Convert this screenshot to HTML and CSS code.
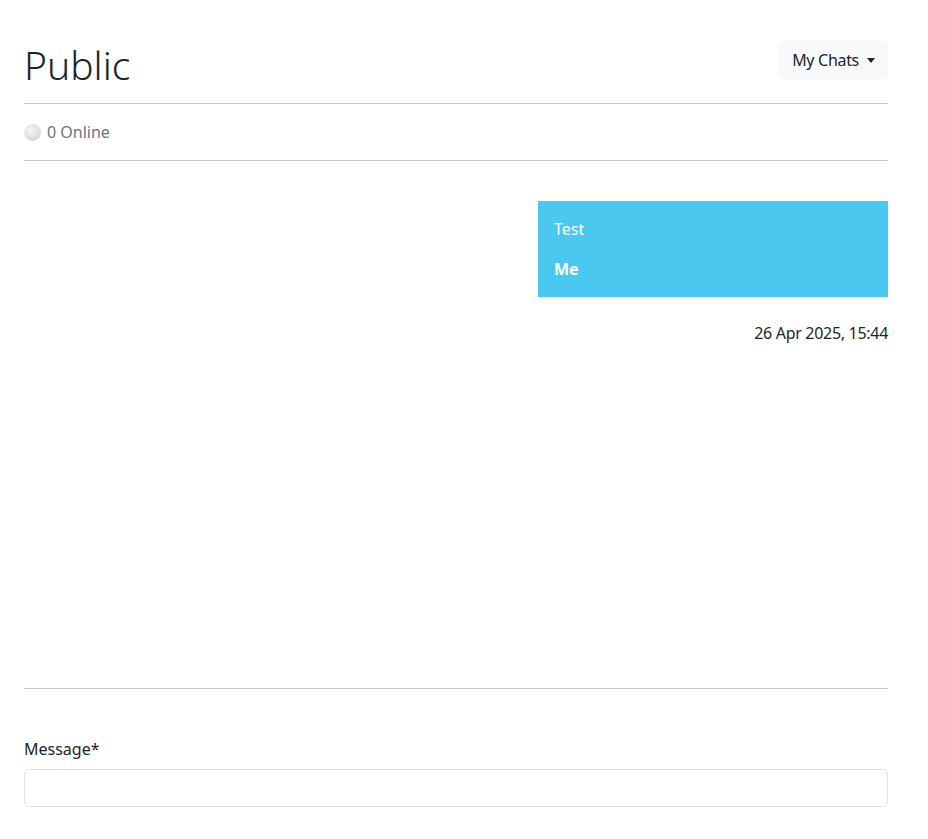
FILE: index.html
```html
<!DOCTYPE html>
<html lang="en">
<head>
<meta charset="utf-8">
<title>Public</title>
<link rel="stylesheet" href="styles.css">
</head>
<body>
<div class="container">
  <header class="head">
    <h1 class="title">Public</h1>
    <button class="dropdown" type="button">My Chats <span class="caret"></span></button>
  </header>
  <hr class="rule">
  <div class="online"><span class="dot"></span>0 Online</div>
  <hr class="rule">
  <div class="messages">
    <div class="msg">
      <div class="bubble">
        <p class="text">Test</p>
        <p class="author">Me</p>
      </div>
      <div class="time">26 Apr 2025, 15:44</div>
    </div>
  </div>
  <hr class="rule">
  <form class="form">
    <label class="label" for="m">Message*</label>
    <input class="input" id="m" type="text">
  </form>
</div>
</body>
</html>
```
FILE: styles.css
```css
* { box-sizing: border-box; }
html, body { margin: 0; background: #fff; }
body {
  font-family: "Noto Sans", "Open Sans", sans-serif;
  font-size: 16px;
  line-height: 1.5;
  color: #212529;
}
.container {
  width: 864px;
  margin-left: 24px;
  padding-top: 41px;
}
.head {
  display: flex;
  justify-content: space-between;
  align-items: center;
  margin-bottom: 14px;
}
.title {
  margin: 0;
  font-size: 39px;
  font-weight: 300;
  line-height: 48px;
}
.dropdown {
  font: inherit;
  font-size: 16px;
  letter-spacing: -0.3px;
  color: #212529;
  background: #f8f9fa;
  border: 1px solid #f8f9fa;
  border-radius: 6px;
  padding: 6px 12px;
  display: flex;
  align-items: center;
  gap: 8px;
  margin-top: -10px;
}
.caret {
  width: 0; height: 0;
  border-left: 4px solid transparent;
  border-right: 4px solid transparent;
  border-top: 5px solid #212529;
}
.rule {
  margin: 0;
  border: 0;
  border-top: 1px solid #c8c9ca;
}
.online {
  display: flex;
  align-items: center;
  gap: 6px;
  color: #6c757d;
  height: 56px;
}
.dot {
  width: 17px; height: 17px;
  border-radius: 50%;
  background: radial-gradient(circle at 40% 35%, #f6f6f6, #d8d8d8 70%, #bdbdbd);
}
.messages {
  height: 527px;
  padding-top: 40px;
}
.msg {
  display: flex;
  flex-direction: column;
  align-items: flex-end;
}
.bubble {
  width: 350px;
  background: #4bc8f0;
  color: #fff;
  padding: 16px 16px 0;
}
.text, .author { margin: 0 0 16px; }
.author { font-weight: 700; }
.time { margin-top: 24px; letter-spacing: -0.3px; }
.form { padding-top: 48px; }
.label { display: block; margin-bottom: 8px; }
.input {
  display: block;
  width: 100%;
  height: 38px;
  border: 1px solid #dee2e6;
  border-radius: 6px;
  font: inherit;
}
```
